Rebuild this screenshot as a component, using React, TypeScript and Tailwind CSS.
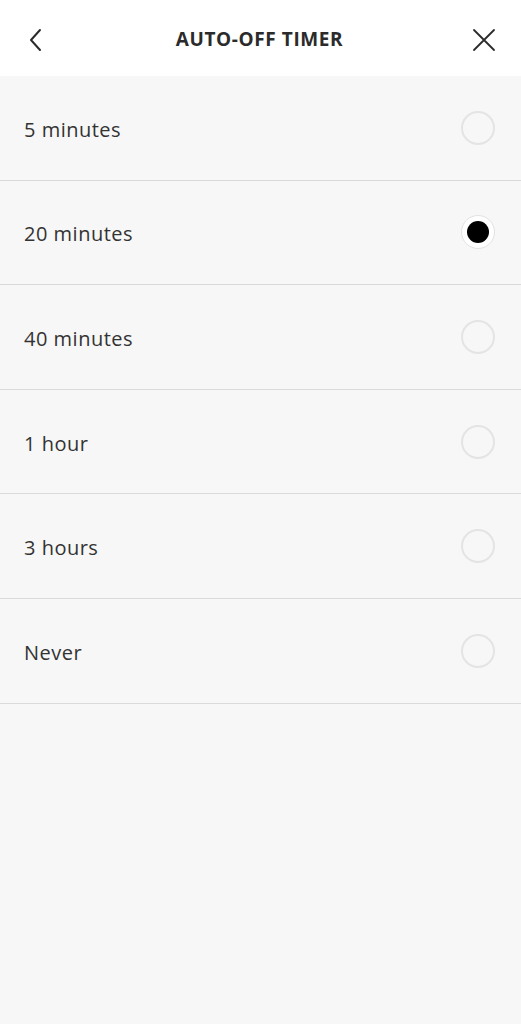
import * as React from 'react';

const options = ['5 minutes', '20 minutes', '40 minutes', '1 hour', '3 hours', 'Never'];

export default function App() {
  const [selected, setSelected] = React.useState('20 minutes');

  return (
    <div className="flex flex-col min-h-screen bg-[#f7f7f7] text-[#2b2b2b]" style={{ fontFamily: '"Open Sans", "Liberation Sans", sans-serif' }}>
      {/* header */}
      <header className="h-[76px] bg-white flex items-center justify-between px-[24px] pt-[3px]">
        <button className="w-[26px] h-[26px] flex items-center justify-center -ml-[2px]">
          <svg width="14" height="24" viewBox="0 0 14 24" fill="none" stroke="#2b2b2b" strokeWidth="2" strokeLinecap="round" strokeLinejoin="round">
            <path d="M12 2 L3 12 L12 22" />
          </svg>
        </button>
        <h1 className="text-[19px] font-bold tracking-[0.6px] text-[#2b2b2b]">AUTO-OFF TIMER</h1>
        <button className="w-[26px] h-[26px] flex items-center justify-center">
          <svg width="24" height="24" viewBox="0 0 24 24" fill="none" stroke="#2b2b2b" strokeWidth="1.8" strokeLinecap="round">
            <path d="M2 2 L22 22 M22 2 L2 22" />
          </svg>
        </button>
      </header>

      {/* options */}
      <ul className="flex flex-col">
        {options.map((opt) => (
          <li
            key={opt}
            onClick={() => setSelected(opt)}
            className="h-[104.6px] flex items-center justify-between pl-[24px] pr-[26px] border-b border-[#dadada]"
          >
            <span className="text-[20px] tracking-[0.5px] text-[#333] pt-[4px]">{opt}</span>
            {selected === opt ? (
              <span className="w-[34px] h-[34px] rounded-full border border-[#e2e2e2] bg-white flex items-center justify-center">
                <span className="w-[22px] h-[22px] rounded-full bg-black" />
              </span>
            ) : (
              <span className="w-[34px] h-[34px] rounded-full border-2 border-[#e4e4e4]" />
            )}
          </li>
        ))}
      </ul>
    </div>
  );
}
